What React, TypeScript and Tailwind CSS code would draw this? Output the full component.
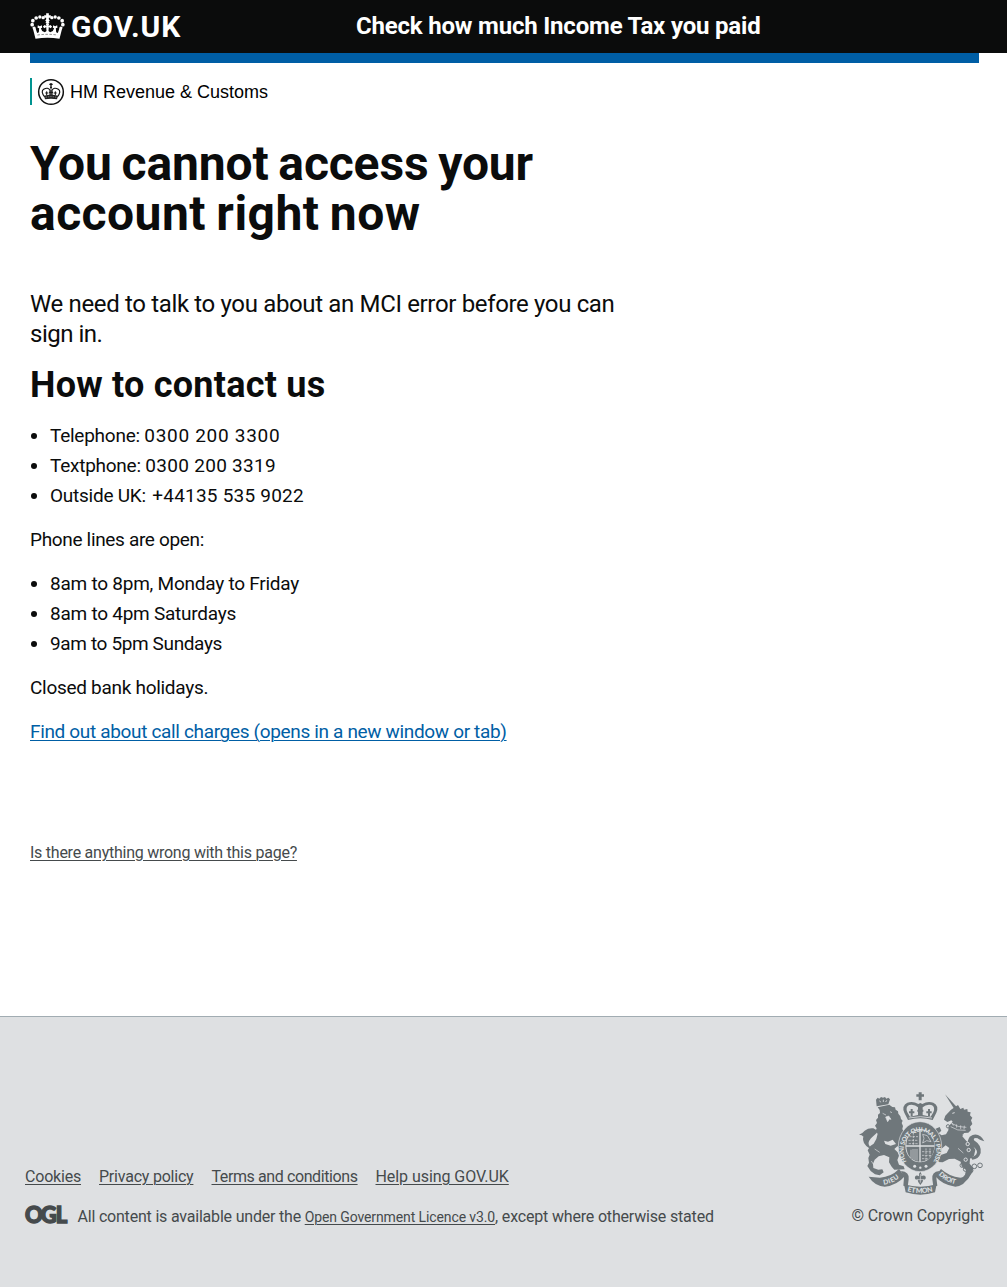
import React from 'react';

function HeaderCrown() {
  return (
    <svg className="mt-[13px] h-[26px] w-[35px] shrink-0" viewBox="18 14 104 78" fill="#fff">
      <path d="M66 15h8v6h6v7h-6v5l3 4-7 5-7-5 3-4v-5h-6v-7h6z" />
      <circle cx="70" cy="42" r="5" />
      <circle cx="57" cy="28" r="5" /><circle cx="47" cy="26" r="5" /><circle cx="36" cy="29" r="5.5" />
      <circle cx="26" cy="37" r="5.5" /><circle cx="24" cy="49" r="5.5" /><circle cx="30" cy="59" r="4.5" />
      <circle cx="83" cy="28" r="5" /><circle cx="93" cy="26" r="5" /><circle cx="104" cy="29" r="5.5" />
      <circle cx="114" cy="37" r="5.5" /><circle cx="116" cy="49" r="5.5" /><circle cx="110" cy="59" r="4.5" />
      <path d="M25 56l9 4 5 14 5-2 1-12-5-2 1-7 6 3 6-3 1 7-4 2 4 8 8 4 5-4-1-12-5 4-5-5 5-5 6 3-2-7h10l-2 7 6-3 5 5-5 5-5-4-1 12 5 4 8-4 4-8-4-2 1-7 6 3 6-3 1 7-5 2 1 12 5 2 5-14 9-4-9 35q-36-5-72 0z" />
      <path d="M40 80q30-4 60 0" fill="none" stroke="#0b0c0c" strokeWidth="1.5" strokeDasharray="7 5" />
    </svg>
  );
}

function Crest() {
  return (
    <svg className="ml-[5px] h-[28px] w-[28px] shrink-0" viewBox="0 0 84 84" fill="none" stroke="#111" strokeWidth="3">
      <circle cx="42" cy="42" r="37" strokeWidth="4.5" />
      <path d="M42 15v14M37 19h10" strokeWidth="4" />
      <circle cx="42" cy="29" r="3" fill="#111" stroke="none" />
      <path d="M23 57Q10 40 20 34q13-8 19 3v16M61 57q13-17 3-23-13-8-19 3v16" strokeWidth="3.5" />
      <path d="M29 40v12M25 45h9M55 40v12M50 45h9M42 34v17M36 43h12" />
      <path d="M21 53q21-6 42 0l-3 11q-18-3-36 0z" fill="#222" stroke="none" />
      <path d="M26 58q16-4 32 0" stroke="#aaa" strokeWidth="2" strokeDasharray="4 3" />
    </svg>
  );
}

function RoyalArms() {
  const g = '#6f777b';
  const p = '#dee0e2';
  return (
    <svg className="h-[103px] w-[126px]" viewBox="29 19 378 309" fill={g}>
      {/* lion */}
      <path d="M80 42l5-6 5 3 5-5 6 2 6-2 4 5 6-3 5 5-5 15-35 6z" />
      <path d="M91 45l3 5M102 42v7M112 44l-3 5" stroke={p} strokeWidth="2.5" />
      <path d="M85 65l35-8 9 7 8 1 2 7 7 5 1 7 6 8 2 8 5 5-3 7 4 9-2 9 4 9-4 14 3 9-6 13 3 12-15-5-9 8 10 10 4 10-5 13 5 14 14 5 3 9-31 1-8-9-8-13 1-15-16-7-16 4-12 10-5 12 1 13 15 5 12-1 4 9-12 9-14-3-13-10-10-15 5-10-2-14 4-10-6-13 8-13 10-7 8-14 4-16-7-6 4-10-5-8 6-8-3-9 6-7 0-9 6-5-1-9z" />
      <path d="M79 192q-24-1-35-20-8-17 6-31 17-14 14-2-14 3-22 14-3-6-13-6 12-5 17-12 12-9 26-7l9 5 1 9-17 16q-13 15-3 25 8 8 19 2z" />
      <path d="M100 83l10 5M122 78l6 3M109 94l6 14 5-8 5 1-7-10z" fill={p} stroke={p} strokeWidth="2" />
      <path d="M104 165l12 3 14-6 10 13-16 5-16-5z" fill={p} />
      <path d="M66 226l9 14 10 6M76 190l15 10" stroke={p} strokeWidth="2" fill="none" />
      {/* crown */}
      <path d="M208 20h9v6h7v7h-7v11h-9V33h-7v-7h7z" />
      <path d="M176 103l-11-22q-9-21 9-30 17-6 33 4l6-3 6 3q16-10 33-4 18 9 9 30l-11 22q-37-10-74 0z" />
      <path d="M174 80q-7-17 6-22 16-3 26 7v23l-24 5zM252 80q7-17-6-22-16-3-26 7v23l24 5z" fill={p} />
      <path d="M187 70v22M179 80h16M239 70v22M231 80h16M213 56v36M204 75h18" stroke={g} strokeWidth="6" />
      <path d="M178 97q35-8 70 0" stroke={p} strokeWidth="2.5" fill="none" />
      {/* motto scroll */}
      <path d="M149 250Q125 274 92 276L58 273Q75 300 106 303Q143 300 166 272z" />
      <path d="M275 250Q300 273 333 276L360 270Q346 300 318 303Q280 299 258 272z" />
      <path d="M155 256Q181 258 178 281L175 303L162 300L164 276zM270 256Q246 258 249 281L252 303L264 300L261 276z" />
      <path d="M164 296Q213 310 262 296L257 320Q213 334 169 320z" />
      <path d="M213 258q6 8 3 14 8-6 13 1 2 9-7 9-1 8-9 16-8-8-8-16-10 1-8-9 5-7 12-1-3-6 4-14z" />
      <path d="M213 265v26M202 282h22" stroke={p} strokeWidth="2" />
      <path id="dieu" d="M103 297q32-4 54-27" fill="none" /><path id="mon" d="M174 317q39 10 79 0" fill="none" /><path id="droit" d="M268 267q24 25 57 29" fill="none" />
      <g fill={p} fontFamily="Lato" fontSize="20" fontWeight="900">
        <text><textPath href="#dieu" textLength="52">DIEU</textPath></text>
        <text fontSize="21"><textPath href="#mon" textLength="77">ET MON</textPath></text>
        <text><textPath href="#droit" textLength="58">DROIT</textPath></text>
      </g>
      {/* unicorn */}
      <path d="M287 26l40 43-9 6z" />
      <path d="M326 58l7 12 9-4 2 6 10-2 1 8 9 2-2 9 7 7-4 8 4 11-7 8 3 10-8 8-13 1-5 10 12 14 17 10 10 16-4 18-12 9-1 15 11 13-3 13-13 20-13 9-8-8 12-14 3-14-13-11-3-14-18-9-17 1-19 10-14-1-7-10 13-10 20-7 8-15-11-8-16 13-14 2-6-12 15-8-2-10-12-3-3-16 8-16 12-5 5 11-8 8 9 6 13-3 7-12 1-12 12-14-4-4-12 5-10-7 4-12 17-18z" />
      <path d="M309 83l7-2" stroke={p} strokeWidth="3" />
      <path d="M306 113q20 13 45 12M304 123q20 14 45 11" fill="none" stroke={p} strokeWidth="2" />
      <path d="M309 112l3 8M321 116l1 10M334 119v11M345 120l-1 11" stroke={p} strokeWidth="2" />
      <path d="M360 188q-12-32 10-40 22-6 35 19-16-5-20-9-14-3-11 6 24 15 20 38-6 19-25 20l-5-8q17-1 19-14 0-11-15-18z" />
      <g fill="none" stroke={g} strokeWidth="3">
        <circle cx="392" cy="239" r="7" /><circle cx="375" cy="242" r="7" /><circle cx="364" cy="254" r="7" /><circle cx="348" cy="251" r="6" /><circle cx="338" cy="239" r="6" />
        <circle cx="296" cy="122" r="5" />
      </g>
      <g fill="none" stroke={p} strokeWidth="3">
        <circle cx="355" cy="175" r="5" /><circle cx="358" cy="193" r="5" /><circle cx="349" cy="222" r="5" />
      </g>
      <path d="M326 188l16 14M340 145l16 17" stroke={p} strokeWidth="2" />
      {/* garter and shield */}
      <ellipse cx="212" cy="183" rx="65" ry="75" stroke={p} strokeWidth="2" />
      <ellipse cx="212" cy="180" rx="44" ry="50" fill={p} />
      <path d="M171 179q2-43 39-45v45zM214 134q38 2 41 45h-41zM171 183h39v45q-36-4-39-45zM214 183h41q-3 41-41 45z" />
      <path d="M180 153h26M177 164h29M178 174h28M192 140v38M218 198h30M218 209h27M218 219h20M230 188v37M242 188v30" stroke={p} strokeWidth="2" strokeDasharray="7 3" />
      <path d="M220 146l14 4 11 18-13-3-12 7 4-14zM185 192v25M191 190v32M197 190v34M203 190v35" stroke={p} strokeWidth="2" fill="none" />
      <path id="garter" d="M172 228A49 57 0 1 1 252 228" fill="none" />
      <text fill={p} fontFamily="Lato" fontSize="19" fontWeight="900">
        <textPath href="#garter" textLength="236">HONI SOIT QUI MAL Y PENSE</textPath>
      </text>
      <circle cx="196" cy="242" r="4.5" fill={p} /><circle cx="213" cy="246" r="3.5" fill={p} /><circle cx="230" cy="242" r="4.5" fill={p} />
    </svg>
  );
}

type Item = { label?: string; text: string; cls: string };

const phoneNumbers: Item[] = [
  { label: 'Telephone: ', text: '0300 200 3300', cls: 'tracking-[0.7px]' },
  { label: 'Textphone: ', text: '0300 200 3319', cls: 'tracking-[0.3px]' },
  { label: 'Outside UK: ', text: '+44135 535 9022', cls: 'ml-[2px] tracking-[0.22px]' },
];
const openingHours: Item[] = [
  { text: '8am to 8pm, Monday to Friday', cls: 'tracking-[-0.24px]' },
  { text: '8am to 4pm Saturdays', cls: 'tracking-[-0.25px]' },
  { text: '9am to 5pm Sundays', cls: 'tracking-[-0.37px]' },
];
const footerLinks = [
  { text: 'Cookies', cls: 'w-[56px] tracking-[-0.2px]' },
  { text: 'Privacy policy', cls: 'w-[94.5px] tracking-[-0.22px]' },
  { text: 'Terms and conditions', cls: 'w-[146px] tracking-[-0.4px]' },
  { text: 'Help using GOV.UK', cls: 'w-[133px] tracking-[-0.06px]' },
];

function Bullets({ items }: { items: Item[] }) {
  return (
    <ul className="mb-[14.6px]">
      {items.map((i) => (
        <li key={i.text} className="flex h-[29.8px] items-start">
          <span className="mt-[10px] mr-[13px] ml-px h-1.5 w-1.5 rounded-full bg-[#0b0c0c]" />
          <span>
            {i.label && <span className="tracking-[-0.25px]">{i.label}</span>}
            <span className={i.cls}>{i.text}</span>
          </span>
        </li>
      ))}
    </ul>
  );
}

export default function App() {
  return (
    <div className="flex h-[1287px] w-[1007px] flex-col overflow-hidden bg-white font-['Roboto',sans-serif] text-[#0b0c0c]">
      <header className="flex h-[53px] shrink-0 items-start bg-[#0b0c0c] pl-[30px] text-white">
        <HeaderCrown />
        <div className="mt-[9px] ml-1.5 w-[285px] text-[30px] leading-9 font-bold tracking-[0.9px]">GOV.UK</div>
        <div className="mt-[11px] text-[24px] leading-[30px] font-bold tracking-[-0.19px] whitespace-nowrap">Check how much Income Tax you paid</div>
      </header>
      <main className="ml-[30px] w-[949px] flex-1">
        <div className="h-[10px] bg-[#005ea5]" />
        <div className="mt-[15px] flex h-[27px] items-center border-l-2 border-[#009390] font-['Liberation_Sans',sans-serif] text-[18px]">
          <Crest />
          <span className="mt-0.5 ml-[5px] text-black">HM Revenue &amp; Customs</span>
        </div>
        <h1 className="mt-[34px] text-[48px] leading-[50px] font-bold whitespace-nowrap">
          <span className="block tracking-[-0.14px] [word-spacing:-2px]">You cannot access your</span>
          <span className="block tracking-[0.45px] [word-spacing:-2px]">account right now</span>
        </h1>
        <p className="mt-[50px] text-[24px] leading-[30px] whitespace-nowrap">
          <span className="block tracking-[-0.35px]">We need to talk to you about an MCI error before you can</span>
          <span className="block tracking-[-0.5px]">sign in.</span>
        </p>
        <h2 className="mt-[16px] mb-[18.4px] text-[36px] leading-[40px] font-bold tracking-[0.24px]">How to contact us</h2>
        <div className="text-[19px] leading-[25px]">
          <Bullets items={phoneNumbers} />
          <p className="mb-[19px] tracking-[-0.33px]">Phone lines are open:</p>
          <Bullets items={openingHours} />
          <p className="mb-[19px] tracking-[-0.29px]">Closed bank holidays.</p>
          <a className="tracking-[-0.34px] text-[#005ea5] underline decoration-1 underline-offset-2">Find out about call charges (opens in a new window or tab)</a>
        </div>
        <a className="mt-[98.6px] block w-fit text-[16px] leading-5 tracking-[-0.25px] text-[#454a4c] underline decoration-1 underline-offset-2">Is there anything wrong with this page?</a>
      </main>
      <footer className="flex h-[271px] shrink-0 justify-between border-t border-[#a1acb2] bg-[#dee0e2] pr-[22px] pl-[25px] text-[16px] leading-5 text-[#454a4c]">
        <div className="pt-[150px]">
          <nav className="flex gap-[18px] whitespace-nowrap">
            {footerLinks.map((l) => (
              <a key={l.text} className={'underline decoration-1 underline-offset-2 ' + l.cls}>{l.text}</a>
            ))}
          </nav>
          <div className="mt-5 flex items-center whitespace-nowrap">
            <svg className="-mt-1 mr-[9.5px] h-[20px] w-[43px] overflow-visible" viewBox="0 0 43 20">
              <text x="0 15.8 30.8" y="18.3" fontFamily="Lato" fontSize="22" fontWeight="900" fill="#454a4c" stroke="#454a4c" strokeWidth="1.4">OGL</text>
            </svg>
            <p>
              <span className="tracking-[-0.2px]">All content is available under the </span>
              <a className="text-[14px] tracking-[-0.11px] underline decoration-1 underline-offset-2">Open Government Licence v3.0</a>
              <span className="tracking-[-0.18px]">, except where otherwise stated</span>
            </p>
          </div>
        </div>
        <div className="flex flex-col items-end pt-[75px]">
          <RoyalArms />
          <p className="mt-[11px] mr-px tracking-[-0.12px]">© Crown Copyright</p>
        </div>
      </footer>
    </div>
  );
}
